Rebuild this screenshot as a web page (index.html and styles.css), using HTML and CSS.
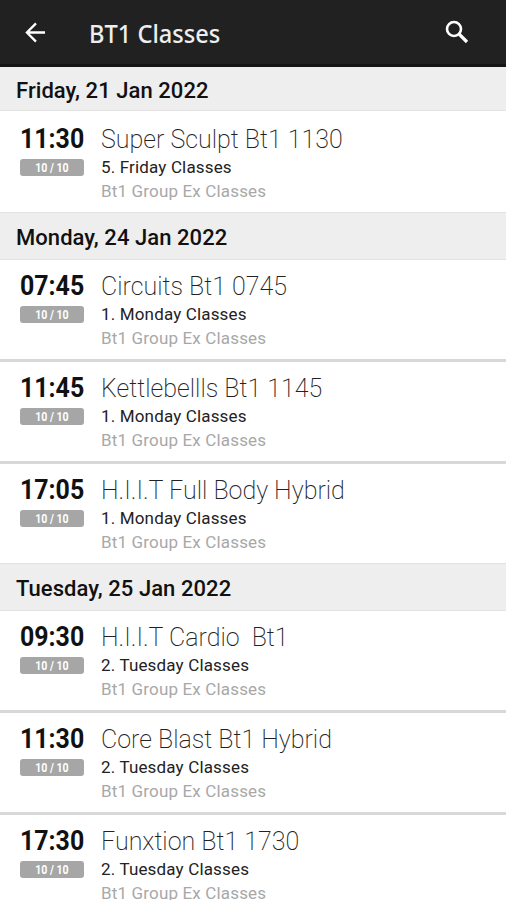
FILE: index.html
```html
<!DOCTYPE html>
<html lang="en">
<head>
  <meta charset="UTF-8">
  <meta name="viewport" content="width=device-width, initial-scale=1">
  <title>BT1 Classes</title>
  <link rel="stylesheet" href="styles.css">
</head>
<body>

  <header class="app-bar">
    <svg class="icon-back" viewBox="0 0 22 22" fill="none" stroke="#fff" stroke-width="2.4">
      <path d="M21 11H2.5M11.5 1.5L2 11l9.5 9.5"/>
    </svg>
    <h1 class="app-title"><span>BT1 Classes</span></h1>
    <svg class="icon-search" viewBox="0 0 24 24" fill="none" stroke="#fff">
      <circle cx="9" cy="9" r="7" stroke-width="2.6"/>
      <path d="M14 14l8 8" stroke-width="3.2"/>
    </svg>
  </header>

  <main id="class-list"></main>

  <script>
    const days = [
      { date: 'Friday, 21 Jan 2022', group: '5. Friday Classes', classes: [
        ['11:30', 'Super Sculpt Bt1 1130']
      ]},
      { date: 'Monday, 24 Jan 2022', group: '1. Monday Classes', classes: [
        ['07:45', 'Circuits Bt1 0745'],
        ['11:45', 'Kettlebellls Bt1 1145'],
        ['17:05', 'H.I.I.T Full Body Hybrid']
      ]},
      { date: 'Tuesday, 25 Jan 2022', group: '2. Tuesday Classes', classes: [
        ['09:30', 'H.I.I.T Cardio  Bt1'],
        ['11:30', 'Core Blast Bt1 Hybrid'],
        ['17:30', 'Funxtion Bt1 1730']
      ]}
    ];

    document.getElementById('class-list').innerHTML = days.map(day => `
      <section class="day">
        <h2 class="day-header">${day.date}</h2>
        ${day.classes.map(([time, name]) => `
          <div class="class-row">
            <div class="slot">
              <div class="time"><span>${time}</span></div>
              <div class="spaces"><span>10 / 10</span></div>
            </div>
            <div class="details">
              <div class="name">${name}</div>
              <div class="group">${day.group}</div>
              <div class="location">Bt1 Group Ex Classes</div>
            </div>
          </div>
        `).join('')}
      </section>
    `).join('');
  </script>
</body>
</html>
```

FILE: styles.css
```css
* {
  box-sizing: border-box;
}

body {
  margin: 0;
  height: 900px;
  overflow: hidden;
  background: #fff;
  color: #111;
  font-family: Roboto, sans-serif;
}

.app-bar {
  display: flex;
  align-items: center;
  height: 67px;
  padding: 0 37px 0 25px;
  background: #212121;
  border-bottom: 3px solid #151515;
}

.icon-back {
  width: 21px;
  height: 21px;
}

.app-title {
  flex: 1;
  margin: 1px 0 0 43px;
  color: #eee;
  font-family: "Noto Sans", sans-serif;
  font-size: 25px;
  font-weight: 500;
  line-height: 32px;
}

.app-title span {
  display: inline-block;
  transform: scaleX(0.945);
  transform-origin: left;
}

.icon-search {
  width: 24px;
  height: 24px;
}

.day-header {
  height: 48px;
  margin: 0;
  padding-left: 16px;
  border: solid #e2e2e2;
  border-width: 1px 0;
  background: #eee;
  font-size: 22px;
  font-weight: 500;
  letter-spacing: 0.06px;
  line-height: 49px;
}

.day:first-child .day-header {
  height: 44px;
  margin-bottom: 2px;
  border-top: 0;
  line-height: 47px;
}

.class-row {
  display: flex;
  height: 99px;
  padding: 10px 20px 0;
}

.class-row + .class-row {
  height: 102px;
  border-top: 3px solid #d8d8d8;
}

.slot {
  width: 64px;
  margin-right: 17px;
}

.time {
  height: 30px;
  font-size: 28px;
  font-weight: 700;
  line-height: 32px;
}

.time span {
  display: inline-block;
  transform: scaleX(0.89);
  transform-origin: left;
}

.spaces {
  height: 17px;
  margin-top: 6px;
  border-radius: 3px;
  background: #a6a6a6;
  color: #fff;
  font-size: 12px;
  font-weight: 700;
  line-height: 18px;
  text-align: center;
}

.spaces span {
  display: inline-block;
  transform: scaleX(0.88);
}

.name {
  height: 32px;
  color: #222;
  font-size: 25px;
  font-weight: 200;
  line-height: 34px;
  white-space: pre;
}

.group,
.location {
  height: 24px;
  color: #222;
  font-size: 17px;
  letter-spacing: 0.16px;
  line-height: 24px;
}

.location {
  color: #a8a8a8;
}
```
